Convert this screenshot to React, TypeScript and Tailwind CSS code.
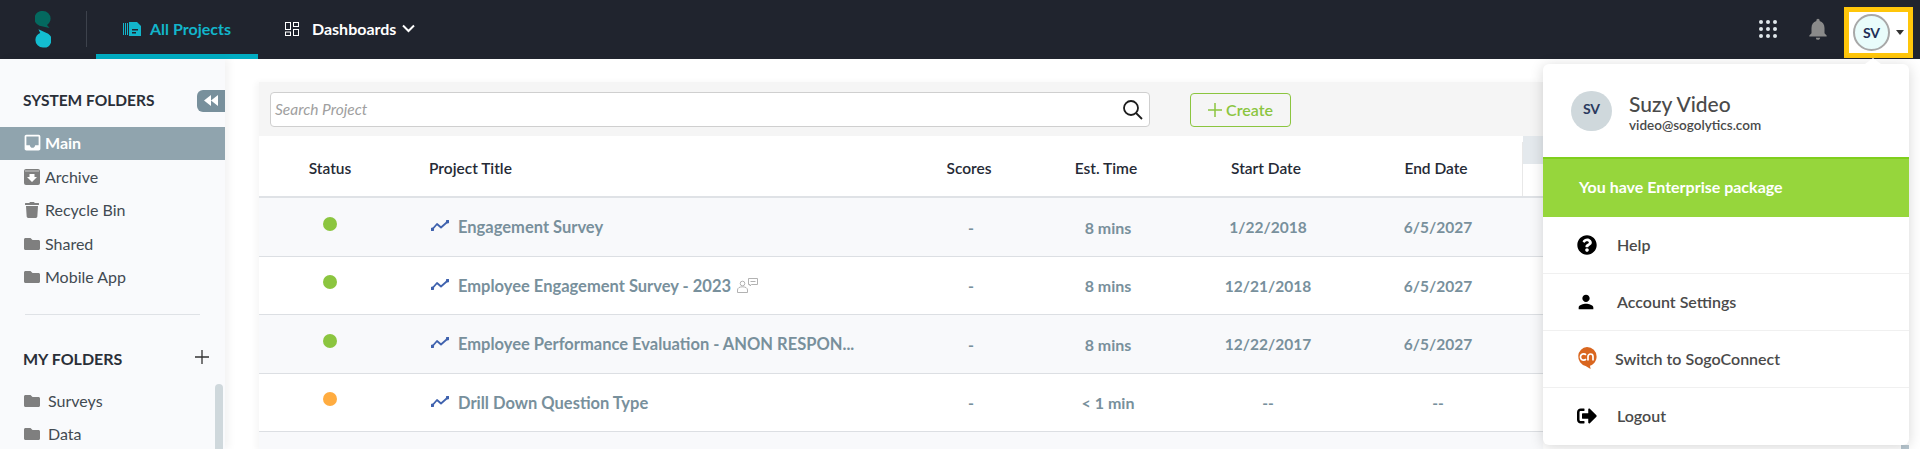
import { FaFolder, FaQuestionCircle, FaSignOutAlt, FaTrash } from 'react-icons/fa';
import { MdInbox, MdNotifications, MdPerson } from 'react-icons/md';

const projects = [
  { title: 'Engagement Survey', status: 'bg-[#8bc53f]', time: '8 mins', start: '1/22/2018', end: '6/5/2027', shade: true },
  { title: 'Employee Engagement Survey - 2023', status: 'bg-[#8bc53f]', time: '8 mins', start: '12/21/2018', end: '6/5/2027', badge: true },
  { title: 'Employee Performance Evaluation - ANON RESPON...', status: 'bg-[#8bc53f]', time: '8 mins', start: '12/22/2017', end: '6/5/2027', shade: true },
  { title: 'Drill Down Question Type', status: 'bg-[#ffac40]', time: '< 1 min', start: '--', end: '--' },
];

function Logo() {
  return (
    <svg width="16" height="37" viewBox="0 0 16 37" className="ml-[35px] shrink-0">
      <path d="M8 0a7.6 7.6 0 0 1 7.6 7.6c0 3-1.6 5.2-3.6 6.3l2.5 3L4.5 14.700A7.6 7.6 0 0 1 8 0z" fill="#04695f" />
      <path d="M8 36.500a7.600 7.600 0 0 1-7.600-7.600c0-3.500 2.300-6 4.800-7l-1.800-3.600 9.800 4.400a7.600 7.600 0 0 1-5.200 13.800z" fill="#13bdd0" />
    </svg>
  );
}

function ProjectsIcon() {
  return (
    <svg width="18" height="14" viewBox="0 0 18 14" fill="#12b5cb" className="shrink-0">
      <rect x="0" y="1" width="1" height="12" />
      <rect x="2" y="1" width="1" height="12" />
      <rect x="4" y="1" width="1" height="12" />
      <path d="M6 0h8l4 4v10H6z" />
      <rect x="9" y="7" width="6" height="1.500" fill="#20242e" />
      <rect x="9" y="10" width="4" height="1.500" fill="#20242e" />
    </svg>
  );
}

function DashIcon() {
  return (
    <svg width="14" height="14" viewBox="0 0 14 14" fill="none" stroke="#fff" strokeWidth="1">
      <rect x="0.500" y="0.500" width="5" height="7" />
      <rect x="8.500" y="0.500" width="5" height="4" />
      <rect x="0.500" y="10" width="5" height="3.500" />
      <rect x="8.500" y="7.500" width="5" height="6" />
    </svg>
  );
}

function AppsIcon() {
  const dots = [2, 9, 16];
  return (
    <svg width="18" height="18" viewBox="0 0 18 18" fill="#dfe7ea">
      {dots.map((y) => dots.map((x) => <circle key={`${x}-${y}`} cx={x} cy={y} r="2" />))}
    </svg>
  );
}

function ArchiveIcon() {
  return (
    <svg width="16" height="16" viewBox="0 0 16 16">
      <rect width="16" height="16" rx="2" fill="#7f7f7f" />
      <rect x="1" y="1" width="14" height="2" fill="#a5a5a5" />
      <path d="M5.500 5h5v3H13l-5 5-5-5h2.500z" fill="#fff" />
    </svg>
  );
}

function TrendIcon() {
  return (
    <svg width="18" height="11" viewBox="0 0 18 11" fill="none" stroke="#3f62ae" strokeWidth="1.800" className="ml-[2px] shrink-0 -translate-y-[2px]">
      <path d="M1.200 9.500 6 4l4 3.500L16.800 1.500" strokeLinejoin="round" />
      <circle cx="1.200" cy="9.500" r="1" fill="#3f62ae" />
      <circle cx="16.800" cy="1.500" r="1" fill="#3f62ae" />
    </svg>
  );
}

function ShareBadge() {
  return (
    <svg width="21" height="15" viewBox="0 0 21 15" fill="none" stroke="#a9a9a9" strokeWidth="0.900" className="ml-[6px] shrink-0 -translate-y-[1px]">
      <circle cx="5.500" cy="5.500" r="2.300" />
      <path d="M0.500 14.500v-2.500c0-2 2-3.200 5-3.200s5 1.200 5 3.200v2.500z" />
      <path d="M11.500 0.500h9v6h-6l-1.500 1.500v-1.500h-1.500z" />
      <path d="M13.500 3.500h5" />
    </svg>
  );
}

function ConnectIcon() {
  return (
    <svg width="20" height="23" viewBox="0 0 20 23" className="shrink-0">
      <path d="M10 0a9.600 9.600 0 0 1 9.600 9.600c0 4.600-3 8-6.600 9.200l.6 3.200-5-3.100A9.600 9.600 0 0 1 10 0z" fill="#d9661f" />
      <path d="M9 7.800a3.200 3.200 0 1 0 0 4.400M11 13.500V9.500a2.500 2.500 0 0 1 5 0v4" fill="none" stroke="#fff" strokeWidth="1.700" />
    </svg>
  );
}

function Caret() {
  return <span className="h-0 w-0 border-x-[4.500px] border-t-[5px] border-x-transparent border-t-[#333]" />;
}

function SideItem({ icon, label, active, gap = 'gap-[5px]' }: { icon: React.ReactNode; label: string; active?: boolean; gap?: string }) {
  return (
    <div className={`flex items-center pl-6 ${gap} ${active ? 'h-[33px] bg-[#90a4ae] pb-[2px] font-bold text-white' : 'h-[33.500px] text-[#424a52]'}`}>
      <span className="flex w-4 shrink-0 justify-center">{icon}</span>
      <span className="text-[16px]">{label}</span>
    </div>
  );
}

function MenuRow({ icon, label, last, textGap = 'w-[40px]' }: { icon: React.ReactNode; label: string; last?: boolean; textGap?: string }) {
  return (
    <div className={`flex h-[57px] items-center pb-[1px] pl-[34px] ${last ? '' : 'border-b border-[#f0f0f0]'}`}>
      <span className={`flex shrink-0 ${textGap}`}>{icon}</span>
      <span className="text-[16px] font-semibold text-[#4a4a4a]">{label}</span>
    </div>
  );
}

export default function App() {
  return (
    <div className="relative h-[449px] w-[1920px] overflow-hidden bg-white font-['Lato',sans-serif]">
      <header className="flex h-[59px] bg-[#20242e]">
        <div className="flex h-full items-start pt-[11px]">
          <Logo />
        </div>
        <div className="ml-[35px] mt-[11px] h-[36px] w-px bg-[#3d424c]" />
        <div className="ml-[9px] flex h-full w-[162px] items-center justify-center gap-[9px] border-b-[5px] border-[#00acc1] pt-[3px] text-[16px] font-bold text-[#12b5cb]">
          <ProjectsIcon />
          All Projects
        </div>
        <div className="ml-[27px] flex h-full items-center gap-[13px] pb-[2px] text-[16px] font-bold text-white">
          <DashIcon />
          <span className="flex items-center gap-[6px]">
            Dashboards
            <svg width="13" height="9" viewBox="0 0 13 9" fill="none" stroke="#fff" strokeWidth="2">
              <path d="m1 1.500 5.500 5.500L12 1.500" />
            </svg>
          </span>
        </div>
        <div className="ml-auto flex h-full items-start pr-[7px] pt-[7px]">
          <span className="mt-[13px]">
            <AppsIcon />
          </span>
          <MdNotifications className="ml-[28px] mt-[9px] text-[#8a8a8a]" size={26} />
          <div className="ml-[13px] flex h-[51px] w-[69px] items-center gap-[6px] border-[5px] border-[#ffc60a] bg-white pl-1">
            <div className="flex h-[37px] w-[37px] items-center justify-center rounded-full border-2 border-[#a8a8a8] bg-[#e9fcfb] text-[14px] font-bold text-[#1f2f57]">
              SV
            </div>
            <Caret />
          </div>
        </div>
      </header>

      <div className="flex h-[390px]">
        <aside className="w-[225px] shrink-0 bg-[#f9fafc] shadow-[4px_0_8px_rgba(0,0,0,0.05)]">
          <div className="flex h-[68px] items-center justify-between pl-[23px] pt-[15px]">
            <span className="text-[15.500px] font-bold text-[#2a2f38]">SYSTEM FOLDERS</span>
            <span className="flex h-[22px] w-[28px] items-center justify-center rounded-l-md bg-[#78909c]">
              <svg width="14" height="11" viewBox="0 0 14 11" fill="#fff">
                <path d="M7 0v11L0 5.500zM14 0v11L7 5.500z" />
              </svg>
            </span>
          </div>
          <SideItem active icon={<MdInbox size={21} className="shrink-0" />} label="Main" />
          <div>
            <SideItem icon={<ArchiveIcon />} label="Archive" />
            <SideItem icon={<FaTrash size={16} className="text-[#7f7f7f]" />} label="Recycle Bin" />
            <SideItem icon={<FaFolder size={16} className="text-[#7f7f7f]" />} label="Shared" />
            <SideItem icon={<FaFolder size={16} className="text-[#7f7f7f]" />} label="Mobile App" />
          </div>
          <div className="ml-[25px] mt-[20px] w-[175px] border-t border-[#dfe2e6]" />
          <div className="flex h-[87px] items-center justify-between pl-[23px] pr-4">
            <span className="text-[16px] font-bold text-[#2a2f38]">MY FOLDERS</span>
            <svg width="14" height="14" viewBox="0 0 14 14" stroke="#333" strokeWidth="1.300" className="-translate-y-[2px]">
              <path d="M7 0v14M0 7h14" />
            </svg>
          </div>
          <div className="relative -mt-[18px]">
            <SideItem gap="gap-[8px]" icon={<FaFolder size={16} className="text-[#7f7f7f]" />} label="Surveys" />
            <SideItem gap="gap-[8px]" icon={<FaFolder size={16} className="text-[#7f7f7f]" />} label="Data" />
            <div className="absolute top-0 right-[2px] h-[70px] w-2 rounded-t-md bg-[#cfd8dc]" />
          </div>
        </aside>

        <main className="ml-[34px] min-w-0 flex-1 pt-[23px]">
          <div className="w-[1284px] shadow-[-3px_0_6px_rgba(0,0,0,0.04)]">
            <div className="flex h-[54px] items-center bg-[#f5f5f5] pl-[11px] pt-[1px]">
              <div className="flex h-[35px] w-[880px] items-center justify-between rounded border border-[#cfcfcf] bg-white pl-1 pr-[6px]">
                <span className="text-[15.500px] italic text-[#a0a0a0]">Search Project</span>
                <svg width="21" height="21" viewBox="0 0 21 21" fill="none" stroke="#1c1c1c" strokeWidth="1.800">
                  <circle cx="9" cy="9" r="7" />
                  <path d="m14 14 6 6" />
                </svg>
              </div>
              <div className="ml-10 flex h-[34px] w-[101px] items-center justify-center gap-1 rounded border border-[#8bc53f] text-[16px] font-semibold text-[#8bc53f]">
                <svg width="14" height="14" viewBox="0 0 14 14" stroke="#8bc53f" strokeWidth="1.500">
                  <path d="M7 0v14M0 7h14" />
                </svg>
                Create
              </div>
            </div>

            <div className="relative flex h-[62px] border-b-2 border-[#dfe2e6] pt-[6px] text-[15.500px] font-semibold text-[#252a35]">
              <div className="flex w-[142px] items-center justify-center">Status</div>
              <div className="flex w-[498px] items-center pl-[28px]">Project Title</div>
              <div className="flex w-[140px] items-center justify-center">Scores</div>
              <div className="flex w-[134px] items-center justify-center">Est. Time</div>
              <div className="flex w-[186px] items-center justify-center">Start Date</div>
              <div className="flex w-[154px] items-center justify-center">End Date</div>
              <div className="w-[10px] border-r border-[#e8e8e8]" />
              <div className="absolute left-[1264px] top-0 h-[28px] w-5 bg-[#e4e9ed]" />
            </div>

            {projects.map((p) => (
              <div
                key={p.title}
                className={`flex h-[58.500px] items-center border-b border-[#dcdfe3] pt-[2px] font-bold text-[#78909c] ${p.shade ? 'bg-[#f8f9fb]' : 'bg-white'}`}
              >
                <div className="flex w-[142px] justify-center">
                  <span className={`h-[14px] w-[14px] -translate-y-1 rounded-full ${p.status}`} />
                </div>
                <div className="flex w-[498px] items-center pl-[28px]">
                  <TrendIcon />
                  <span className="ml-[9px] whitespace-nowrap text-[16.500px]">{p.title}</span>
                  {p.badge && <ShareBadge />}
                </div>
                <div className="w-[140px] pl-1 text-center text-[16px]">-</div>
                <div className="w-[134px] pl-1 text-center text-[16px]">{p.time}</div>
                <div className="w-[186px] pl-1 text-center text-[15.500px]">{p.start}</div>
                <div className="w-[154px] pl-1 text-center text-[15.500px]">{p.end}</div>
              </div>
            ))}
            <div className="h-[19px] bg-[#f8f9fb]" />
          </div>
        </main>
      </div>

      <div className="absolute left-[1901px] top-[445px] h-1 w-2 bg-[#b8c7d0]" />

      <div className="absolute left-[1543px] top-[64px] h-[381px] w-[366px] rounded-md bg-white shadow-[0_2px_14px_rgba(0,0,0,0.16)]">
        <span className="absolute -top-[6px] left-[322px] h-0 w-0 border-x-[8px] border-b-[6px] border-x-transparent border-b-white" />
        <div className="flex h-[93px] items-center pl-[28px]">
          <div className="flex h-[40px] w-[41px] items-center justify-center rounded-full bg-[#cfd8dc] pb-1 text-[14px] font-bold text-[#2a3a5e]">
            SV
          </div>
          <div className="ml-[17px] pt-[3px] text-[#4a4a4a]">
            <div className="text-[21px] font-medium leading-[26px]">Suzy Video</div>
            <div className="text-[13.500px] font-semibold leading-[16px]">video@sogolytics.com</div>
          </div>
        </div>
        <div className="flex h-[60px] items-center border-t-2 border-[#7fcf1c] bg-[#96d63c] pb-[3px] pl-9 text-[16px] font-bold text-white">
          You have Enterprise package
        </div>
        <MenuRow icon={<FaQuestionCircle size={20} className="text-black" />} label="Help" />
        <MenuRow icon={<MdPerson size={22} className="-ml-[2px] text-black" />} label="Account Settings" />
        <MenuRow icon={<ConnectIcon />} label="Switch to SogoConnect" textGap="w-[38px]" />
        <MenuRow icon={<FaSignOutAlt size={20} className="text-black" />} label="Logout" last />
      </div>
    </div>
  );
}
